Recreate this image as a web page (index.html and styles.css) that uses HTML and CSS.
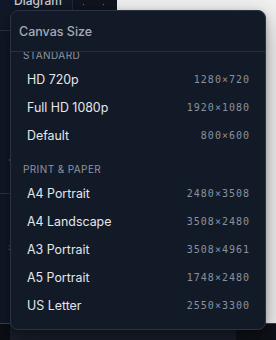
FILE: index.html
```html
<!DOCTYPE html>
<html>
<head>
<meta charset="utf-8">
<link rel="stylesheet" href="styles.css">
</head>
<body>
<div class="app">
  <div class="main">
    <aside class="sidebar">
      <div class="sidebar-col">
        <div class="sidebar-title">Diagram</div>
        <div class="sidebar-rule r1"></div>
        <div class="sidebar-dot"></div>
        <div class="sidebar-rule r2"></div>
        <div class="sidebar-colon">:</div>
      </div>
      <div class="thumb"><span></span><span></span></div>
    </aside>
    <section class="canvas"></section>
  </div>
  <footer class="statusbar">
    <div class="status-left"></div>
    <div class="status-mid"></div>
    <div class="status-right"></div>
  </footer>

  <div class="popover">
    <div class="pop-header">Canvas Size</div>
    <div class="pop-list">
      <div class="pop-scroll">
        <div class="group-label">STANDARD</div>
        <div class="item"><span class="name">HD 720p</span><span class="dim">1280×720</span></div>
        <div class="item"><span class="name">Full HD 1080p</span><span class="dim">1920×1080</span></div>
        <div class="item"><span class="name">Default</span><span class="dim">800×600</span></div>
        <div class="group-label">PRINT &amp; PAPER</div>
        <div class="item"><span class="name">A4 Portrait</span><span class="dim">2480×3508</span></div>
        <div class="item"><span class="name">A4 Landscape</span><span class="dim">3508×2480</span></div>
        <div class="item"><span class="name">A3 Portrait</span><span class="dim">3508×4961</span></div>
        <div class="item"><span class="name">A5 Portrait</span><span class="dim">1748×2480</span></div>
        <div class="item"><span class="name">US Letter</span><span class="dim">2550×3300</span></div>
      </div>
    </div>
  </div>
</div>
</body>
</html>
```

FILE: styles.css
```css
* { box-sizing: border-box; }
html, body { margin: 0; padding: 0; }
body {
  width: 276px;
  height: 340px;
  overflow: hidden;
  font-family: Inter, "Noto Sans", sans-serif;
  background: #111827;
}
.app {
  position: relative;
  width: 276px;
  height: 340px;
  display: flex;
  flex-direction: column;
}
.main {
  flex: 1;
  display: flex;
  min-height: 0;
}
.sidebar {
  width: 117px;
  display: flex;
  background: #111827;
}
.sidebar-col {
  width: 73px;
  border-right: 1px solid #1f2937;
  display: flex;
  flex-direction: column;
}
.sidebar-title {
  margin-top: -6px;
  padding-left: 14px;
  font-size: 12px;
  line-height: 14px;
  font-weight: 500;
  color: #c9ced6;
}
.sidebar-rule {
  height: 1px;
  background: #2b3341;
}
.sidebar-rule.r1 { margin-top: 22px; }
.sidebar-dot {
  margin: 128px 0 0 9px;
  width: 2px;
  height: 2px;
  background: #4b5563;
}
.sidebar-rule.r2 { margin-top: 32px; }
.sidebar-colon {
  margin: 48px 0 0 8px;
  font-size: 9px;
  line-height: 10px;
  color: #6b7280;
}
.thumb {
  flex: 1;
  height: 12px;
  background: #0f1420;
  display: flex;
  gap: 19px;
  padding: 4px 0 0 10px;
}
.thumb span {
  width: 1px;
  height: 1px;
  background: #6b7280;
}
.canvas {
  flex: 1;
  background: #f1f1f2;
}
.statusbar {
  height: 17px;
  display: flex;
  background: #0e1118;
  border-top: 1px solid #3b4252;
}
.status-left { width: 10px; background: #0b0e14; }
.status-mid { width: 226px; background: #191e2a; }
.status-right { flex: 1; background: #0e1118; }

.popover {
  position: absolute;
  left: 10px;
  top: 10px;
  width: 256px;
  height: 320px;
  background: #131a27;
  border: 1px solid #2a3243;
  border-radius: 8px;
  box-shadow: 0 10px 28px rgba(0, 0, 0, 0.35), 0 2px 6px rgba(0, 0, 0, 0.2);
  display: flex;
  flex-direction: column;
  overflow: hidden;
}
.pop-header {
  height: 41px;
  flex: none;
  display: flex;
  align-items: center;
  padding: 0 8px;
  border-bottom: 1px solid #263042;
  font-size: 12.5px;
  font-weight: 500;
  color: #a4aab5;
}
.pop-list {
  flex: 1;
  overflow: hidden;
}
.pop-scroll {
  margin-top: -16px;
}
.group-label {
  padding: 12px 12px 4px;
  font-size: 10px;
  line-height: 14px;
  letter-spacing: 0.4px;
  color: #8d95a2;
}
.item {
  height: 28px;
  display: flex;
  align-items: center;
  justify-content: space-between;
  padding: 0 16px;
  font-size: 12.4px;
  line-height: 28px;
  font-weight: 400;
  color: #e4e7ec;
}
.dim {
  font-family: "DejaVu Sans Mono", monospace;
  font-size: 10px;
  font-weight: 400;
  letter-spacing: 1px;
  color: #8a919d;
  margin-right: -1px;
}
```
